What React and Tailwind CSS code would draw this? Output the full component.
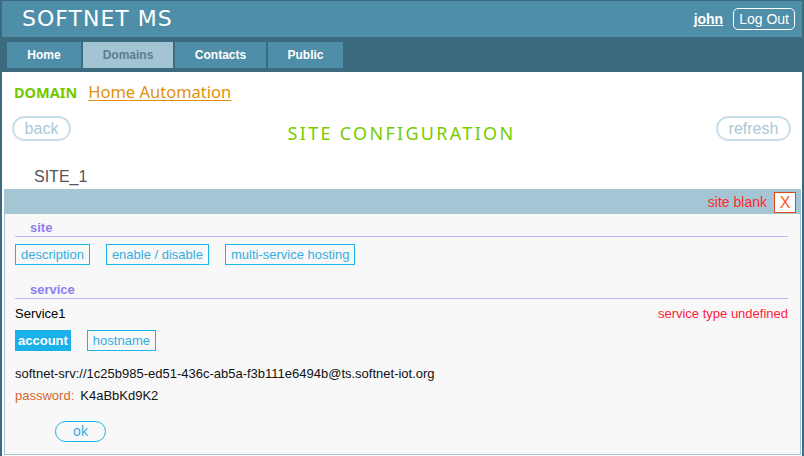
import React from "react";

const tabs = ["Home", "Domains", "Contacts", "Public"];
const tabWidths = { Home: "w-[74px]", Domains: "w-[90px]", Contacts: "w-[91px]", Public: "w-[75px]" };

const OutlineButton = ({ text }) => (
  <button className="h-[21px] px-[5px] border border-[#1ab4ea] text-[13px] leading-[19px] text-[#36aee0] bg-transparent">
    {text}
  </button>
);

const SectionLabel = ({ text }) => (
  <div className="leading-[16px] border-b border-[#b9b8f6] pl-[15px] text-[13px] font-bold text-[#8c7ef0]">
    {text}
  </div>
);

const App = () => {
  return (
    <div
      className="w-full h-[456px] bg-white border-l-2 border-r-2 border-t border-[#3c6b7f] overflow-hidden"
      style={{ fontFamily: '"Liberation Sans", Arial, sans-serif' }}
    >
      {/* header */}
      <div className="h-[36px] bg-[#4f8ea8] flex items-center justify-between pl-[20px] pr-[7px]">
        <span
          className="text-white text-[22px] tracking-[1px] leading-none"
          style={{ fontFamily: '"DejaVu Sans", Verdana, sans-serif' }}
        >
          SOFTNET MS
        </span>
        <div className="flex items-center gap-[10px]">
          <a className="text-white text-[14px] font-bold underline">john</a>
          <button className="h-[22px] px-[5px] border border-white rounded-[5px] text-white text-[14px] leading-[20px]">
            Log Out
          </button>
        </div>
      </div>

      {/* nav */}
      <div className="h-[35px] bg-[#3c6b7f] flex gap-[2px] pl-[5px] pt-[5px]">
        {tabs.map((t) => (
          <div
            key={t}
            className={
              tabWidths[t] +
              " h-[26px] flex items-center justify-center text-[12px] font-bold " +
              (t === "Domains" ? "bg-[#a2c4d3] text-[#5a7f90]" : "bg-[#4f8ea8] text-white")
            }
          >
            {t}
          </div>
        ))}
      </div>

      {/* domain */}
      <div
        className="pt-[10px] pl-[12px] leading-[20px] flex items-baseline gap-[11px]"
        style={{ fontFamily: '"Noto Sans", Tahoma, sans-serif' }}
      >
        <span className="text-[14.5px] font-bold text-[#74c800]">DOMAIN</span>
        <a className="text-[16.5px] text-[#e0900c] underline underline-offset-2">Home Automation</a>
      </div>

      {/* title row */}
      <div className="mt-[14px] h-[25px] grid grid-cols-[1fr_auto_1fr] items-start px-[10px] pr-[11px]">
        <div>
          <button className="h-[25px] w-[59px] rounded-full border-2 border-[#c8dfe9] text-[16px] leading-[20px] text-[#a9c8d6]">
            back
          </button>
        </div>
        <div
          className="mt-[6px] text-[18px] leading-[22px] tracking-[2.3px] text-[#76cc00]"
          style={{ fontFamily: '"Noto Sans", Tahoma, sans-serif' }}
        >
          SITE CONFIGURATION
        </div>
        <div className="flex justify-end">
          <button className="h-[25px] w-[75px] rounded-full border-2 border-[#c8dfe9] text-[16px] leading-[20px] text-[#a9c8d6]">
            refresh
          </button>
        </div>
      </div>

      <div className="mt-[26px] pl-[32px] text-[16px] leading-[20px] text-[#555]">SITE_1</div>

      {/* site panel */}
      <div className="mt-[2px] ml-[2px] mr-[1px] border border-[#a3c5d4]">
        <div className="h-[24px] bg-[#a3c5d4] flex items-center justify-end gap-[7px] pr-[4px]">
          <span className="text-[14px] text-[#ff2a2a]">site blank</span>
          <button className="w-[22px] h-[21px] bg-white border border-[#e2460e] text-[16px] leading-[19px] text-[#ff5a1a]">
            X
          </button>
        </div>
        <div className="bg-[#f8f8f8] pl-[10px] pr-[12px] pt-[6px] pb-[11px]">
          <SectionLabel text="site" />
          <div className="mt-[7px] flex gap-[16px]">
            <OutlineButton text="description" />
            <OutlineButton text="enable / disable" />
            <OutlineButton text="multi-service hosting" />
          </div>

          <div className="mt-[17px]">
            <SectionLabel text="service" />
          </div>

          <div className="mt-[7px] flex justify-between text-[13px] leading-[16px]">
            <span className="text-black">Service1</span>
            <span className="text-[#ff1a3c]">service type undefined</span>
          </div>

          <div className="mt-[8px] flex gap-[16px]">
            <button className="h-[21px] px-[2px] bg-[#1ab0e8] border border-[#1ab0e8] text-[13px] font-bold leading-[19px] text-white">
              account
            </button>
            <OutlineButton text="hostname" />
          </div>

          <div className="mt-[15px] text-[13px] leading-[16px] text-[#111]">
            softnet-srv://1c25b985-ed51-436c-ab5a-f3b111e6494b@ts.softnet-iot.org
          </div>
          <div className="mt-[6px] text-[13px] leading-[16px] flex gap-[6px]">
            <span className="text-[#d2652e]">password:</span>
            <span className="text-[#111]">K4aBbKd9K2</span>
          </div>

          <div className="mt-[15px] ml-[40px]">
            <button className="h-[21px] w-[51px] rounded-full border border-[#1ab4ea] text-[14px] leading-[19px] text-[#36aee0]">
              ok
            </button>
          </div>
        </div>
      </div>
    </div>
  );
};

export default App;
